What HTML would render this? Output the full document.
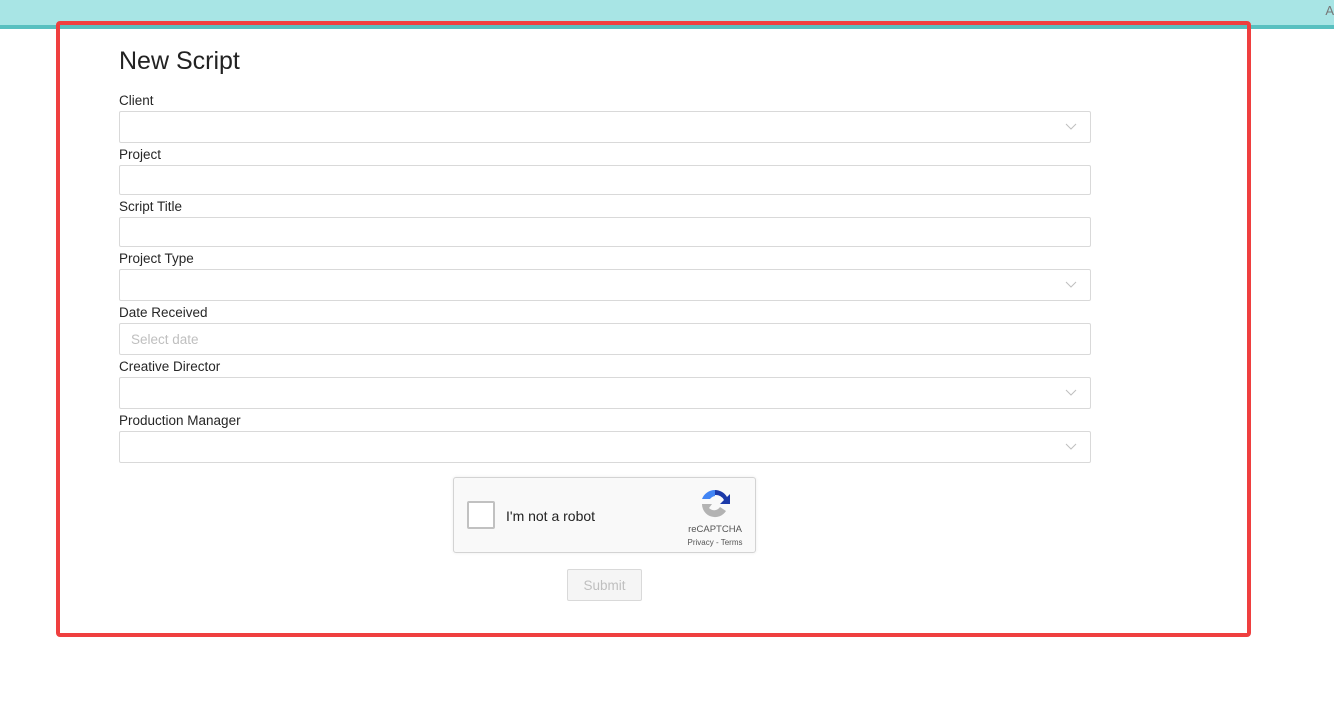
<!DOCTYPE html>
<html><head><style>
body{margin:0;width:1334px;height:716px;background:#fff;font-family:"Liberation Sans",sans-serif;position:relative;overflow:hidden;color:#262626}
.top{position:absolute;left:0;top:0;width:1334px;height:25px;background:#a8e5e5;border-bottom:4px solid #58c0c0}
.red{position:absolute;left:56px;top:21px;width:1187px;height:608px;border:4px solid #ef3f3f;border-radius:4px}
h1{position:absolute;left:119px;top:47px;margin:0;font-size:25px;font-weight:normal;color:#222}
.l{position:absolute;left:119px;font-size:13.5px;color:#262626}
.f{position:absolute;left:119px;width:970px;border:1px solid #d9d9d9;border-radius:2px;background:#fff}
.ch{position:absolute;right:13px;top:50%;margin-top:-7px}
.ph{position:absolute;left:11px;top:8px;font-size:13.5px;color:#bfbfbf}
.cap{position:absolute;left:453px;top:477px;width:301px;height:74px;border:1px solid #d3d3d3;border-radius:3px;background:#f9f9f9;box-shadow:0 0 3px rgba(0,0,0,.08)}
.cb{position:absolute;left:13px;top:23px;width:24px;height:24px;border:2px solid #c1c1c1;border-radius:2px;background:#fff}
.sub{position:absolute;left:567px;top:569px;width:73px;height:30px;border:1px solid #d9d9d9;border-radius:2px;background:#f5f5f5;color:#bfbfbf;font-size:13.5px;text-align:center;line-height:31px}
</style></head><body>
<div class="top"></div>
<div style="position:absolute;right:0;top:3px;font-size:13px;color:#777">A</div>
<div class="red"></div>
<h1>New Script</h1>
<div class="l" style="top:93px">Client</div>
<div class="f" style="top:111px;height:30px"><svg class="ch" width="12" height="12" viewBox="0 0 12 12"><path d="M1 4l5 5 5-5" fill="none" stroke="#bfbfbf" stroke-width="1"/></svg></div>
<div class="l" style="top:147px">Project</div>
<div class="f" style="top:165px;height:28px"></div>
<div class="l" style="top:199px">Script Title</div>
<div class="f" style="top:217px;height:28px"></div>
<div class="l" style="top:251px">Project Type</div>
<div class="f" style="top:269px;height:30px"><svg class="ch" width="12" height="12" viewBox="0 0 12 12"><path d="M1 4l5 5 5-5" fill="none" stroke="#bfbfbf" stroke-width="1"/></svg></div>
<div class="l" style="top:305px">Date Received</div>
<div class="f" style="top:323px;height:30px"><span class="ph">Select date</span></div>
<div class="l" style="top:359px">Creative Director</div>
<div class="f" style="top:377px;height:30px"><svg class="ch" width="12" height="12" viewBox="0 0 12 12"><path d="M1 4l5 5 5-5" fill="none" stroke="#bfbfbf" stroke-width="1"/></svg></div>
<div class="l" style="top:413px">Production Manager</div>
<div class="f" style="top:431px;height:30px"><svg class="ch" width="12" height="12" viewBox="0 0 12 12"><path d="M1 4l5 5 5-5" fill="none" stroke="#bfbfbf" stroke-width="1"/></svg></div>
<div class="cap"><div class="cb"></div>
<div style="position:absolute;left:52px;top:30px;font-size:14px;color:#222">I'm not a robot</div>
<svg style="position:absolute;left:245px;top:10px" width="32" height="32" viewBox="0 0 32 32"><path d="M16 2a14 14 0 0 1 12 7l3-3v10H21l4-4a9 9 0 0 0-9-5z" fill="#1c3aa9"/><path d="M16 2A14 14 0 0 0 3 11h8a8 8 0 0 1 5-3z" fill="#4285f4"/><path d="M3 16a13 13 0 0 0 24 7l-6-4a7 7 0 0 1-11 1l3-4z" fill="#b3b3b3"/></svg>
<div style="position:absolute;left:230px;top:46px;width:62px;text-align:center;font-size:9.5px;color:#555">reCAPTCHA</div>
<div style="position:absolute;left:228px;top:60px;width:66px;text-align:center;font-size:8px;color:#555">Privacy - Terms</div>
</div>
<div class="sub">Submit</div>
</body></html>
